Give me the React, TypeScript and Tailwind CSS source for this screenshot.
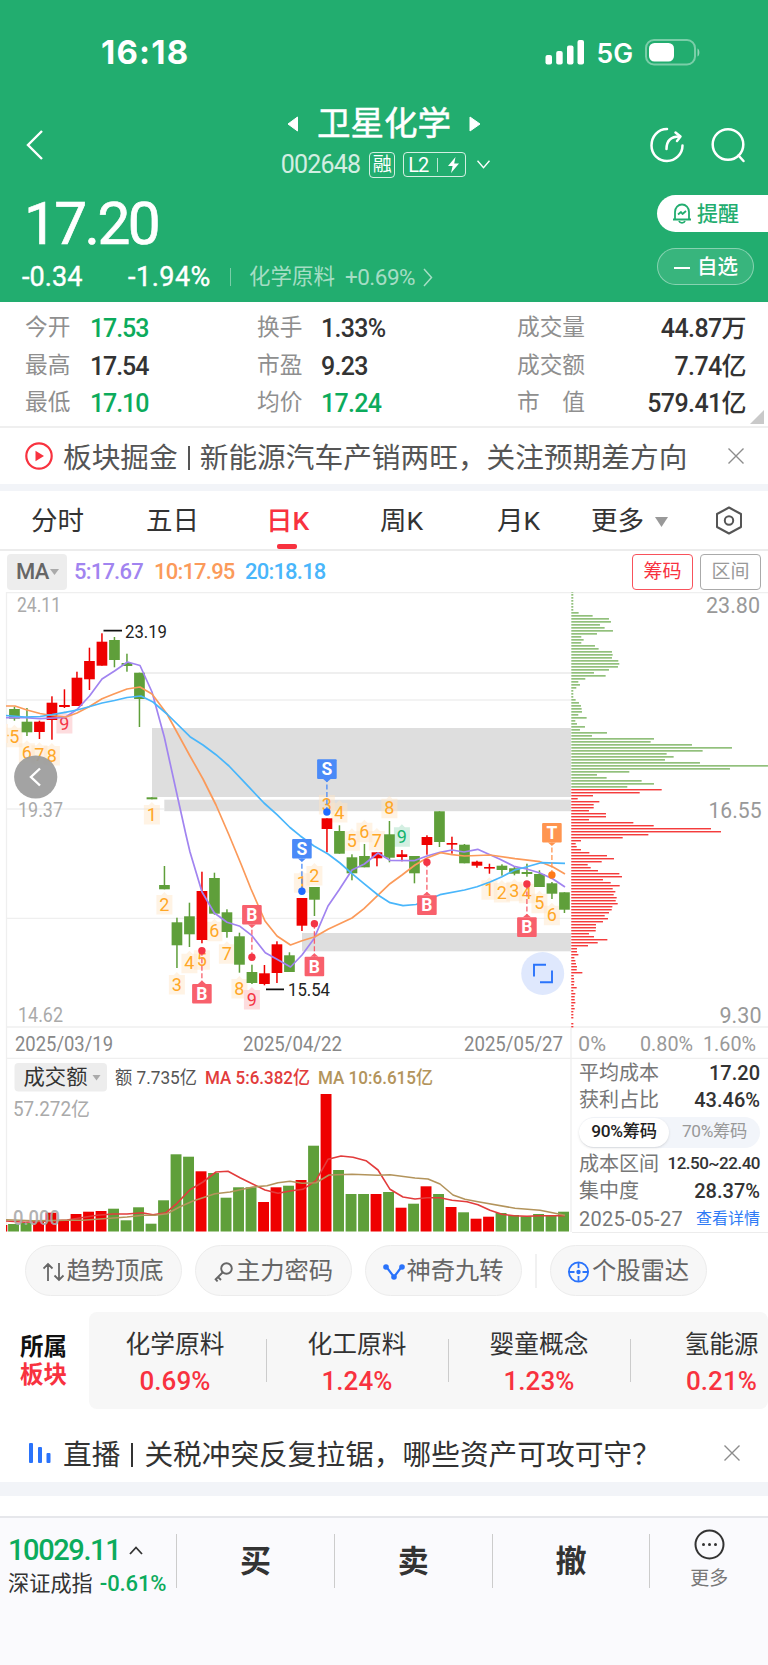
import { clsx } from "clsx";

type Candle = [high: number, top: number, bottom: number, low: number, up?: 1];

const UP = "#ee0000";
const DOWN = "#5f9f3a";

const candleX = (i: number) => 14.4 + i * 12.5;

const candles: Candle[] = [
  [706.7, 709, 718.7, 720.7], [708, 721.7, 732.3, 736], [720.7, 721.7, 732, 739, 1],
  [696.3, 702.7, 720, 739.7, 1], [689.3, 705, 707, 708, 1], [671.7, 677.7, 706, 706, 1],
  [647.7, 661, 679.3, 690, 1], [633.3, 641.7, 665.7, 665.7, 1], [637, 640, 660, 667.3],
  [653.7, 663, 666, 671.7], [672.7, 672.7, 699, 727], [797.3, 797.3, 799.3, 799.3],
  [866, 885, 889.3, 889.3], [917.7, 922.3, 945.3, 968], [902.7, 916.3, 934.3, 947],
  [871.7, 891, 940, 943.3, 1], [872.7, 878, 913.7, 914.7], [909.3, 912.3, 932, 937.7],
  [932.7, 936.3, 964.7, 972.7], [964.7, 972, 983, 984], [965, 973.3, 984, 985.3, 1],
  [941.3, 944.3, 973, 983, 1], [952.3, 955.3, 972, 972], [898, 898, 925.7, 931, 1],
  [887, 887, 899.7, 916], [818.3, 818.3, 829, 852.3, 1], [825.3, 831, 853.7, 853.7],
  [854.3, 857.3, 873.3, 880.3], [844, 856, 867.3, 867.3], [852.3, 852.3, 858.3, 866.3, 1],
  [821, 834.3, 857.7, 862.3], [850, 854.3, 857, 861.3, 1], [856, 856, 873.3, 883.3],
  [835.3, 837, 845, 854.7, 1], [811.3, 811.3, 842, 847], [836.7, 843, 844.7, 853.7, 1],
  [844, 844.7, 863.3, 863.3], [860.7, 861.7, 865.7, 867.7, 1], [863.7, 867, 868.5, 873.7, 1],
  [864.3, 865.7, 870, 875.7], [867, 868.3, 873.7, 875.3], [863.7, 872, 874, 876.7],
  [870.3, 874, 887, 887], [882, 883.3, 893.7, 899], [892.3, 892.3, 909.7, 913],
];

const ma5 =
  "6,717.7 25,717.7 40,718.7 65,717.5 77,709.5 89.5,696 102,679 114.5,671 127.5,662 140,665.5 152,692 164.3,737 176,790 186,835 190,852 202,892 214.4,913 227,922.3 240,926.3 252,935.7 265.3,952.7 277,959.3 290.5,967 302,955 314,938.7 328,906 339,890 352,870 364.4,864 378,853 390,860.3 414,860.7 427,856 440,852.3 452,850 464,852 477.7,849.3 500,859.3 514,866.3 526.7,869 540,873 553,879 565,887";
const ma10 =
  "6,706 15,706 27,710 40,713.5 52,715.5 66,717 77,713 89.5,706.5 102,698.7 114.5,693.7 127,689 140,687 152,694 167,714 190,756 203,779 216,805 229,835 241,864 251,889 258,905 265,921 277,936 290.5,945 302,940.7 315,936.7 328,929.3 352,918 364,908.7 390,883.7 402,875 415,865 427,858 440.7,852.7 452,854.7 464.5,856 490,855 515,858.7 540,861.7 553,867 565,874";
const ma20 =
  "6,715.5 25,717 40,716.5 52,714.7 65,712.3 77,710 89,706.7 102,703 114.5,700.5 127,697.5 141,696 153,702 167,714 190,736.7 203,745 216,754.7 229,766 241,778.7 264,803 277,814.7 290,827.5 300,835.7 314,846 328,854 340,863 352,873.7 364,883.7 378,895 390,902.7 403,905.7 416,904.5 440,894.7 464.5,890 477,886.7 490,882 502,876.7 515,870 527,866.7 541,862.7 565,863.3";

// [candle index, digit, centre y]
const counts: [number, string, number][] = [
  [0, "5", 736.7], [1, "6", 752.3], [2, "7", 754.3], [3, "8", 755], [4, "9", 723],
  [11, "1", 814], [12, "2", 904], [13, "3", 984], [14, "4", 962.7], [15, "5", 959.3],
  [16, "6", 930.7], [17, "7", 953.3], [18, "8", 988], [19, "9", 999],
  [23, "1", 882.3], [24, "2", 875], [25, "3", 804], [26, "4", 812], [27, "5", 840.3],
  [28, "6", 831.7], [29, "7", 840], [30, "8", 807.7], [31, "9", 836.3],
  [38, "1", 889.3], [39, "2", 892], [40, "3", 890.7], [41, "4", 892.7], [42, "5", 902.7], [43, "6", 914.7],
];

const signals = [
  { i: 25, label: "S", y: 759.3, dot: 812, fill: "#4a8af8", dotFill: "#1f6bff", below: false },
  { i: 23, label: "S", y: 839, dot: 891.3, fill: "#4a8af8", dotFill: "#1f6bff", below: false },
  { i: 15, label: "B", y: 984, dot: 950.7, fill: "#f8606c", dotFill: "#f43545", below: true },
  { i: 19, label: "B", y: 905, dot: 957.3, fill: "#f8606c", dotFill: "#f43545", below: false },
  { i: 24, label: "B", y: 956.7, dot: 923.7, fill: "#f8606c", dotFill: "#f43545", below: true },
  { i: 33, label: "B", y: 895.3, dot: 862.3, fill: "#f8606c", dotFill: "#f43545", below: true },
  { i: 41, label: "B", y: 917.3, dot: 884, fill: "#f8606c", dotFill: "#f43545", below: true },
  { i: 43, label: "T", y: 823, dot: 875, fill: "#ff9550", dotFill: "#ff7a1a", below: false },
];

const chipsGreen = [
  6, 6, 6, 6, 6, 6, 6, 22, 64, 113, 119, 86, 100, 125, 77, 30, 37, 30, 71, 82, 122, 124, 122, 141, 144, 140, 113,
  68, 103, 42, 21, 26, 15, 6, 6, 6, 13, 23, 29, 31, 32, 21, 46, 12, 17, 41, 26, 107, 62, 248, 238, 362, 482, 394,
  286, 307, 281, 386, 590, 476, 174, 77, 106, 211, 248, 168,
];
const chipsRed = [
  271, 205, 65, 19, 84, 67, 67, 53, 104, 104, 53, 186, 247, 419, 449, 231, 154, 29, 13, 16, 29, 54, 107, 128, 91,
  49, 58, 80, 144, 152, 95, 118, 145, 124, 132, 127, 136, 133, 139, 123, 121, 113, 100, 110, 95, 74, 74, 73, 53,
  68, 108, 79, 50, 17, 17, 21, 9, 12, 14, 17, 16, 33, 7, 8, 9, 8, 16, 6, 12, 10, 10, 12, 7, 10, 6, 6, 6, 0, 6, 6,
];

const volumeTops = [
  1224, 1223, 1221, 1212.7, 1220.7, 1214, 1211.7, 1211, 1208.7, 1220.3, 1207.3, 1223.7, 1200.3, 1154.3, 1156.7,
  1171.3, 1173, 1197.7, 1187.3, 1187.3, 1202, 1187.3, 1185.7, 1180, 1145.7, 1094, 1170, 1194, 1194, 1194, 1192,
  1207.7, 1203.7, 1186.3, 1194, 1207, 1212.3, 1218.7, 1216.7, 1213, 1215, 1216.3, 1214, 1215.3, 1211.7,
];
const volMa5 =
  "6,1221 25,1222.3 67,1220 97,1215.3 113,1214 127,1214 142,1212.7 153,1214.7 166,1212.7 177,1203.3 190,1189.7 203,1182 216,1172 228,1171.3 240,1177.7 265,1190 278,1193.3 290,1191 303,1189.3 316,1180.7 328,1159.3 341,1156 353,1157.3 366,1160.7 378,1170 390,1189.3 403,1197 415,1199 427,1197.7 440,1197.7 452,1200.3 467,1201.7 478,1204.7 490,1210.3 502,1214.3 514,1215.7 527,1216.3 540,1215.7 565,1215.7";
const volMa10 =
  "6,1219.7 33,1220.7 67,1220.3 83,1220.3 100,1219 127,1217 143,1215.3 155,1215.3 167,1213.7 180,1206.7 193,1201 215,1193.7 230,1192 253,1187 267,1185.7 278,1182.7 290,1181.3 302,1183.3 316,1182.7 329,1175 352,1174.3 378,1175.3 390,1174.7 415,1178 428,1179 440,1184 453,1195 465,1199.3 478,1201.7 515,1208.3 540,1210.3 565,1215.3";

const stats = [
  ["今开", "17.53", true, "换手", "1.33%", false, "成交量", "44.87万"],
  ["最高", "17.54", false, "市盈", "9.23", false, "成交额", "7.74亿"],
  ["最低", "17.10", true, "均价", "17.24", true, "市　值", "579.41亿"],
] as const;

const sectors = [
  ["化学原料", "0.69%"],
  ["化工原料", "1.24%"],
  ["婴童概念", "1.23%"],
  ["氢能源", "0.21%"],
];

function countColors(i: number, n: string) {
  if (n !== "9") return ["#ffa726", "rgba(255,228,196,.45)"];
  return i === 31 ? ["#12b36b", "#d3efe2"] : ["#f43545", "#fddcde"];
}

function ChartText({
  x, y, w, size, fill, end, weight = 400, children,
}: {
  x: number; y: number; w: number; size: number; fill: string; end?: boolean; weight?: number; children: string;
}) {
  return (
    <text
      x={x}
      y={y + size * 0.355}
      fontSize={size}
      fill={fill}
      fontWeight={weight}
      textAnchor={end ? "end" : "start"}
      textLength={w}
      lengthAdjust="spacingAndGlyphs"
    >
      {children}
    </text>
  );
}

function CloseIcon() {
  return (
    <svg width="16" height="16" viewBox="0 0 16 16" stroke="#8c8c8c" strokeWidth="1.4">
      <path d="M0.5 0.5 15.5 15.5M15.5 0.5 0.5 15.5" />
    </svg>
  );
}

function StatusBar() {
  return (
    <div className="flex h-[104px] items-center justify-between pr-[67px] pl-[101px]">
      <span className="mt-px font-[Inter] text-[33px] leading-none font-bold tracking-[1.2px]">16:18</span>
      <div className="flex items-center">
        <svg width="40" height="25" viewBox="0 0 40 25" fill="#fff">
          <rect x="0.5" y="15" width="6.5" height="9.5" rx="2" />
          <rect x="11.2" y="11" width="6.5" height="13.5" rx="2" />
          <rect x="22" y="5.5" width="6.5" height="19" rx="2" />
          <rect x="32.5" y="0" width="6.5" height="24.5" rx="2" />
        </svg>
        <span className="mt-[2px] ml-[11px] font-[Inter] text-[26.5px] leading-none font-semibold">5G</span>
        <svg className="ml-3" width="56" height="27" viewBox="0 0 56 27" fill="none">
          <rect x="1" y="1" width="49" height="24.5" rx="8" stroke="#fff" strokeOpacity="0.4" strokeWidth="2" />
          <rect x="4" y="4" width="25" height="18.5" rx="5.5" fill="#fff" />
          <path d="M52.5 9.5c2.5 1 2.5 7 0 8z" fill="#fff" fillOpacity="0.5" />
        </svg>
      </div>
    </div>
  );
}

function Header() {
  return (
    <header className="h-[302px] bg-[#22ad6f] text-white">
      <StatusBar />
      <div className="flex h-[82px] items-center justify-between pr-[22px] pl-[26px]">
        <svg width="76" height="30" viewBox="0 0 76 30" fill="none" stroke="#fff" strokeWidth="2.4">
          <path d="M16 1 2 15 16 29" />
        </svg>
        <div className="flex flex-col items-center pl-[20px]">
          <div className="-mt-[3px] mr-[3px] flex h-[38px] items-center">
            <svg width="12" height="16" viewBox="0 0 12 16" fill="#fff" stroke="#fff" strokeLinejoin="round">
              <path d="M10.5 1v14L1 8z" />
            </svg>
            <h1 className="mx-[18px] text-[33.5px] leading-none [-webkit-text-stroke:0.5px_white]">卫星化学</h1>
            <svg width="12" height="16" viewBox="0 0 12 16" fill="#fff" stroke="#fff" strokeLinejoin="round">
              <path d="M1 1v14L11 8z" />
            </svg>
          </div>
          <div className="mt-[4px] flex h-9 items-center">
            <span className="text-[25px] leading-none tracking-[-0.8px] opacity-80">002648</span>
            <span className="ml-[9px] flex h-[26px] w-[26px] items-center justify-center rounded-[4px] border border-white/80 text-[19px] leading-none">
              融
            </span>
            <span className="ml-2 flex h-[25px] w-[63px] items-center rounded-[4px] border border-white/80 pl-1 text-[20px] leading-none tracking-[-1px]">
              L2
              <i className="mr-[9px] ml-[9px] h-[14px] w-px bg-white/70" />
              <svg width="13" height="16" viewBox="0 0 13 16" fill="#fff">
                <path d="M8.5 0 1 9h4.6L4 16l8-9.6H7.2z" />
              </svg>
            </span>
            <svg className="ml-[11px]" width="13" height="9" viewBox="0 0 13 9" fill="none" stroke="#fff" strokeWidth="1.4">
              <path d="M0.5 0.7 6.5 7.7 12.5 0.7" />
            </svg>
          </div>
        </div>
        <div className="flex items-center gap-[26px]">
          <svg width="36" height="36" viewBox="0 0 36 36" fill="none" stroke="#fff" strokeWidth="2.5" strokeLinecap="round" strokeLinejoin="round">
            <path d="M18 2C9 2 2.5 9.5 2.5 18.5S9.5 34 18 34s15.5-7 15.5-15.5" />
            <path d="M17.5 22c0-8 4-12.5 13-12.5" />
            <path d="M26.5 5.500 31.500 9.500 28 14" />
          </svg>
          <svg width="35" height="36" viewBox="0 0 35 36" fill="none" stroke="#fff" strokeWidth="2.5" strokeLinecap="round">
            <circle cx="17" cy="17.5" r="15.3" />
            <path d="M27.5 28.500 32.500 34" />
          </svg>
        </div>
      </div>
      <div className="flex justify-between">
        <div className="flex flex-col">
          <div className="mt-[8px] flex h-[60px] items-center pl-[24px] text-[58.5px] leading-none tracking-[-2.6px] [-webkit-text-stroke:0.7px_white]">17.20</div>
          <div className="mt-[3px] flex h-10 items-center pl-[22px] leading-none">
            <span className="w-[106px] text-[27px] tracking-[0.1px] [-webkit-text-stroke:0.4px_white]">-0.34</span>
            <span className="text-[27px] tracking-[0.5px] [-webkit-text-stroke:0.4px_white]">-1.94%</span>
            <i className="mr-[18px] ml-[19px] h-[18px] w-px bg-white/40" />
            <span className="text-[21.5px] text-white/60">化学原料</span>
            <span className="ml-[10px] text-[22.5px] tracking-[-0.5px] text-white/60">+0.69%</span>
            <svg className="ml-2" width="10" height="19" viewBox="0 0 10 19" fill="none" stroke="#fff" strokeOpacity="0.6" strokeWidth="1.5">
              <path d="M1 1 8.5 9.500 1 18" />
            </svg>
          </div>
        </div>
        <div className="mt-[9px] flex flex-col">
          <div className="flex h-[37px] w-[111px] items-center rounded-l-full bg-white pl-[15px] text-[21px] leading-none font-medium text-[#22ad6f]">
            <svg width="20" height="21" viewBox="0 0 20 21" fill="none" stroke="#22ad6f" strokeWidth="1.8" strokeLinejoin="round">
              <path d="M3 16V9a7 7.5 0 0 1 14 0v7M1 16.500h18" />
              <path d="M7 18c1 2.5 5 2.5 6 0M6 11.500 9 9l1.500 2L14 8" />
            </svg>
            <span className="mt-[1px] ml-[5px]">提醒</span>
          </div>
          <div className="mt-4 flex h-[37px] w-[97px] items-center rounded-full border border-white/40 bg-white/10 pt-[2px] pl-4 text-[20.5px] leading-none font-medium">
            <i className="mr-[7px] h-[2px] w-4 bg-white" />
            自选
          </div>
        </div>
      </div>
    </header>
  );
}

function Stats() {
  return (
    <section className="relative flex h-[126px] flex-col border-b-2 border-[#efefef] pt-[8px]">
      {stats.map(([a, av, aGreen, b, bv, bGreen, c, cv]) => (
        <div key={a} className="flex h-[37.5px] items-center pr-[22px] pl-[25px] text-[22.7px] leading-none text-[#8f8f8f]">
          <span className="w-[65px]">{a}</span>
          <span className={clsx("w-[167px] text-[25px] font-medium tracking-[-1.1px]", aGreen ? "text-[#0cab5c]" : "text-[#333]")}>{av}</span>
          <span className="w-[64px]">{b}</span>
          <span className={clsx("w-[196px] text-[25px] font-medium tracking-[-0.7px]", bGreen ? "text-[#0cab5c]" : "text-[#333]")}>{bv}</span>
          <span>{c}</span>
          <span className="ml-auto text-[25px] font-medium tracking-[-0.6px] text-[#333]">{cv}</span>
        </div>
      ))}
      <svg className="absolute right-1 bottom-[2px]" width="14" height="14" viewBox="0 0 14 14">
        <path d="M14 0v14H0z" fill="#c9c9c9" />
      </svg>
    </section>
  );
}

function NewsRow() {
  return (
    <div className="flex h-[56px] items-center pr-[24px] pl-[25px]">
      <svg width="28" height="28" viewBox="0 0 28 28" fill="none">
        <circle cx="14" cy="14" r="12.7" stroke="#f8323f" strokeWidth="2.2" />
        <path d="M10.5 8.8v10.4L19 14z" fill="#f8323f" />
      </svg>
      <span className="mt-[4px] ml-[10px] text-[28.7px] leading-none whitespace-nowrap text-[#555]">
        板块掘金
        <i className="mx-[10px] inline-block h-[24px] w-[2px] bg-[#555] align-[-2px]" />
        新能源汽车产销两旺，关注预期差方向
      </span>
      <span className="ml-auto">
        <CloseIcon />
      </span>
    </div>
  );
}

function Tabs() {
  return (
    <nav className="flex h-[60px] items-center border-b-2 border-[#ececec] pt-[3px] text-[26.5px] leading-none text-[#333]">
      <span className="ml-[31px] w-[115px]">分时</span>
      <span className="w-[120px]">五日</span>
      <span className="relative w-[114px] text-[#f8323f]">
        <b className="font-medium">日K</b>
        <i className="absolute top-[36px] left-[11px] h-[5px] w-5 rounded-[2px] bg-[#f8323f]" />
      </span>
      <span className="w-[117px]">周K</span>
      <span className="w-[94px]">月K</span>
      <span>更多</span>
      <svg className="ml-[11px]" width="13" height="10" viewBox="0 0 13 10">
        <path d="M0 0h13L6.5 10z" fill="#999" />
      </svg>
      <svg className="-mt-[3px] ml-[47px]" width="28" height="29" viewBox="0 0 28 29" fill="none" stroke="#555" strokeWidth="2" strokeLinejoin="round">
        <path d="M14 1.500 26 8v13L14 27.500 2 21V8z" />
        <circle cx="14" cy="14.5" r="4.2" />
      </svg>
    </nav>
  );
}

function MaRow() {
  return (
    <div className="flex h-[41px] items-center pr-[7px] pl-[7px] text-[22px] leading-none font-medium tracking-[-0.8px]">
      <span className="flex h-9 w-[60px] items-center rounded-[4px] bg-[#ededed] pl-[9px] text-[#666]">
        MA
        <svg className="ml-[2px]" width="9" height="6" viewBox="0 0 9 6">
          <path d="M0 0h9L4.5 6z" fill="#aaa" />
        </svg>
      </span>
      <span className="ml-[7px] w-[80px] text-[#a184f0]">5:17.67</span>
      <span className="w-[91px] text-[#fb9a5a]">10:17.95</span>
      <span className="text-[#49b6fb]">20:18.18</span>
      <span className="ml-auto flex h-9 w-[61px] items-center justify-center rounded-[4px] border border-[#f8525c] text-[19px] font-normal tracking-normal text-[#f8323f]">
        筹码
      </span>
      <span className="ml-[7px] flex h-9 w-[61px] items-center justify-center rounded-[4px] border border-[#aaa] text-[19px] font-normal tracking-normal text-[#999]">
        区间
      </span>
    </div>
  );
}

function KLine() {
  return (
    <svg className="block" width="768" height="467" viewBox="0 592 768 467">
      <g fill="#dedede">
        <rect x="152" y="728" width="419" height="69" />
        <rect x="164.3" y="799.7" width="406.7" height="11.5" />
        <rect x="302" y="933" width="269" height="18.3" />
      </g>
      <g stroke="#efefef" strokeWidth="1.3">
        <path d="M6 592.6H768M6 700H571M6 809H164M6 918.3H571M6 1027H768M6 1058.5H768M6.5 592V1059M571 1027V1059" />
        <path d="M144 673H571" strokeWidth="2" />
      </g>
      <ChartText x={17} y={605} w={44} size={19.5} fill="#aaa">24.11</ChartText>
      <ChartText x={18} y={810} w={45} size={19.5} fill="#aaa">19.37</ChartText>
      <ChartText x={18} y={1015.5} w={45} size={19.5} fill="#aaa">14.62</ChartText>
      <g>
        {chipsGreen.map((n, i) => (
          <rect key={i} x="571.3" y={591 + i * 3} width={n / 3} height="1.7" fill="#92c07c" />
        ))}
        {chipsRed.map((n, i) => (
          <g key={i}>
            <rect x="571.3" y={789 + i * 3} width={n / 3} height="2" fill="#fcc4c4" />
            <rect x="571.3" y={789 + i * 3} width={n / 3} height="1.2" fill="#f43c3c" />
          </g>
        ))}
      </g>
      <path d="M6 724h2v19H6z" fill="#fff1e2" />
      <path d="M7 735.5h2" stroke="#ffa726" strokeWidth="1.5" />
      {counts.map(([i, n, y]) => {
        const [color, bg] = countColors(i, n);
        const x = candleX(i);
        return (
          <g key={i}>
            <path d={`M${x - 8} ${y - 9}h5l3-3 3 3h5v19.5h-16z`} fill={bg} />
            <text x={x} y={y + 6.5} fontSize="18" fill={color} textAnchor="middle">{n}</text>
          </g>
        );
      })}
      {candles.map(([high, top, bottom, low, up], i) => (
        <g key={i} fill={up ? UP : DOWN}>
          <rect x={candleX(i) - 0.7} y={high} width="1.5" height={low - high} />
          <rect x={candleX(i) - 5.3} y={top} width="10.7" height={Math.max(bottom - top, 1.6)} />
        </g>
      ))}
      <g fill="none" strokeWidth="1.7" strokeLinejoin="round">
        <polyline points={ma5} stroke="#a184f0" />
        <polyline points={ma10} stroke="#fb9a5a" />
        <polyline points={ma20} stroke="#49b6fb" />
      </g>
      {signals.map((s) => {
        const x = candleX(s.i);
        return (
          <g key={s.i}>
            <path d={`M${x} ${s.dot}V${s.below ? s.y : s.y + 19.5}`} stroke={s.fill} strokeWidth="1.3" strokeDasharray="5 2.5" />
            <circle cx={x} cy={s.dot} r="3.7" fill={s.dotFill} />
            <rect x={x - 9.8} y={s.y} width="19.6" height="19.6" rx="1" fill={s.fill} />
            <path
              d={s.below ? `M${x - 4} ${s.y}l4-3.5 4 3.5z` : `M${x - 4} ${s.y + 19.5}l4 3.5 4-3.5z`}
              fill={s.fill}
            />
            <text x={x} y={s.y + 16} fontSize="17.5" fontWeight="700" fill="#fff" textAnchor="middle">{s.label}</text>
          </g>
        );
      })}
      <path d="M103.5 630.7H122M266 989.3H284" stroke="#111" strokeWidth="1.7" />
      <ChartText x={125} y={631.5} w={42} size={18} fill="#222">23.19</ChartText>
      <ChartText x={288} y={990} w={42} size={18} fill="#222">15.54</ChartText>
      <circle cx="35.7" cy="777" r="21.6" fill="#9c9c9c" fillOpacity="0.93" />
      <path d="M40 768.5 31 777l9 8.5" fill="none" stroke="#fff" strokeWidth="2.4" />
      <circle cx="542.7" cy="973.5" r="21.5" fill="#dfe8fd" />
      <path d="M534 976.5V964.8H546M540 982.3H552V970.5" fill="none" stroke="#2a73fb" strokeWidth="1.9" />
      <ChartText x={15} y={1044} w={98} size={20} fill="#888">2025/03/19</ChartText>
      <ChartText x={243} y={1044} w={99} size={20} fill="#888">2025/04/22</ChartText>
      <ChartText x={464} y={1044} w={99} size={20} fill="#888">2025/05/27</ChartText>
      <ChartText x={760} y={605.5} w={54} size={22} fill="#999" end>23.80</ChartText>
      <ChartText x={761.5} y={810.5} w={53} size={22} fill="#999" end>16.55</ChartText>
      <ChartText x={761.5} y={1015.5} w={42} size={22} fill="#999" end>9.30</ChartText>
      <ChartText x={578} y={1044.5} w={28} size={19.5} fill="#999">0%</ChartText>
      <ChartText x={640} y={1044.5} w={53} size={19.5} fill="#999">0.80%</ChartText>
      <ChartText x={703} y={1044.5} w={53} size={19.5} fill="#999">1.60%</ChartText>
    </svg>
  );
}

function Volume() {
  return (
    <svg className="block" width="572" height="174" viewBox="0 1059 572 174">
      <path d="M6.5 1059V1232M571 1059V1232" stroke="#efefef" strokeWidth="1.3" />
      <rect x="14.5" y="1063" width="92.5" height="28.5" rx="4" fill="#ededed" />
      <ChartText x={23.5} y={1076.5} w={64} size={21} fill="#333">成交额</ChartText>
      <path d="M92.5 1075h8l-4 5.5z" fill="#aaa" />
      <ChartText x={115} y={1078} w={82} size={18} fill="#555">额 7.735亿</ChartText>
      <ChartText x={205} y={1078} w={105} size={18} fill="#e23c3c" weight={500}>MA 5:6.382亿</ChartText>
      <ChartText x={318} y={1078} w={115} size={18} fill="#b3945c" weight={500}>MA 10:6.615亿</ChartText>
      <ChartText x={13} y={1109} w={77} size={19.5} fill="#aaa">57.272亿</ChartText>
      <rect x="6" y="1225" width="1.3" height="6.5" fill={UP} />
      {volumeTops.map((top, i) => (
        <rect key={i} x={candleX(i) - 6.3} y={top} width="10.9" height={1231.5 - top} fill={candles[i][4] ? UP : DOWN} />
      ))}
      <g fill="none" strokeWidth="1.6" strokeLinejoin="round">
        <polyline points={volMa5} stroke="#e23c3c" />
        <polyline points={volMa10} stroke="#b3945c" />
      </g>
      <g opacity="0.9">
        <ChartText x={13} y={1218.5} w={47} size={19.5} fill="#aaa" weight={500}>0.000</ChartText>
      </g>
    </svg>
  );
}

function ChipPanel() {
  return (
    <div className="flex h-[174px] flex-1 flex-col border-b border-[#ececec] pr-[8px] pl-[7px] text-[20px] leading-none whitespace-nowrap text-[#777]">
      <div className="mt-[1px] flex h-[27px] items-center justify-between">
        平均成本<span className="font-medium text-[#333]">17.20</span>
      </div>
      <div className="flex h-[27px] items-center justify-between">
        获利占比<span className="font-medium text-[#333]">43.46%</span>
      </div>
      <div className="mt-[3px] flex h-[31px] items-center rounded-full bg-[#f2f5fa] text-[17.3px] tracking-[-0.3px] text-[#999]">
        <span className="flex h-[29px] w-[90px] items-center justify-center rounded-full bg-white font-medium text-[#222] shadow-sm">90%筹码</span>
        <span className="flex-1 text-center">70%筹码</span>
      </div>
      <div className="mt-[3px] flex h-[27px] items-center justify-between">
        成本区间<span className="text-[17px] font-medium tracking-[-0.5px] text-[#333]">12.50~22.40</span>
      </div>
      <div className="flex h-[28px] items-center justify-between">
        集中度<span className="font-medium text-[#333]">28.37%</span>
      </div>
      <div className="flex h-[27px] items-center justify-between tracking-[0.3px]">
        2025-05-27<span className="text-[16px] tracking-normal text-[#2f7bf5]">查看详情</span>
      </div>
    </div>
  );
}

const pill =
  "flex h-[51px] w-[157px] items-center justify-center rounded-full border border-[#ececec] bg-[#f7f7f7] pt-[2px] text-[24.3px] leading-none whitespace-nowrap text-[#666]";

function Tools() {
  return (
    <div className="flex h-[75px] items-center gap-[13px] pl-[25px]">
      <div className={pill}>
        <svg width="23" height="20" viewBox="0 0 23 20" fill="none" stroke="#666" strokeWidth="1.8">
          <path d="M5 19V2M0.5 6.5 5 2l4.500 4.500M16 1v17M11.500 13.500l4.500 4.500 4.500-4.500" />
        </svg>
        趋势顶底
      </div>
      <div className={pill}>
        <svg width="22" height="20" viewBox="0 0 22 20" fill="none" stroke="#666" strokeWidth="1.9">
          <circle cx="12.5" cy="6.5" r="5.3" />
          <path d="M8.800 10.300 1 18M4 15l3 3M1.500 16.500l2 3" />
        </svg>
        主力密码
      </div>
      <div className={pill}>
        <svg width="23" height="18" viewBox="0 0 23 18" fill="#2a73fb">
          <path d="M3.5 4 11 14 18.500 4" fill="none" stroke="#2a73fb" strokeWidth="2.2" />
          <circle cx="3" cy="4" r="2.8" />
          <circle cx="11" cy="14" r="2.8" />
          <circle cx="19" cy="4" r="2.8" />
        </svg>
        神奇九转
      </div>
      <i className="h-[34px] w-[2px] bg-[#f1f1f1]" />
      <div className={pill}>
        <svg width="24" height="22" viewBox="0 0 24 22" fill="none" stroke="#2a73fb" strokeWidth="1.8">
          <circle cx="10.5" cy="11" r="9.6" />
          <path d="M10.5 1.500v5.500M10.500 15v5.500M1 11h5.500M14.500 11H20" />
          <circle cx="10.5" cy="11" r="1.3" fill="#2a73fb" />
        </svg>
        个股雷达
      </div>
    </div>
  );
}

function Sectors() {
  return (
    <div className="flex h-[106px] items-start">
      <div className="mt-[26px] w-[89px] pl-[20px] text-[23.5px] leading-[27.5px] font-bold">
        <p className="text-[#111]">所属</p>
        <p className="text-[#f8323f]">板块</p>
      </div>
      <div className="mt-[4px] flex h-[97px] w-[679px] overflow-hidden rounded-[8px] bg-[#f7f7f7]">
        {sectors.map(([name, pct], i) => (
          <div key={name} className={clsx("flex shrink-0 items-center", i === 0 ? "w-[178px]" : "w-[182px]")}>
            <div className={clsx("flex flex-1 flex-col items-center pt-[6px] text-[24.7px] leading-none", i === 0 ? "-ml-[5px]" : "-ml-[1px]")}>
              <span className="text-[#333]">{name}</span>
              <span className="mt-[11px] text-[26px] font-medium tracking-[0.1px] text-[#f8323f]">{pct}</span>
            </div>
            {i < 3 && <i className="h-[43px] w-px bg-[#ccc]" />}
          </div>
        ))}
      </div>
    </div>
  );
}

function LiveRow() {
  return (
    <div className="flex h-[68px] items-center pt-[10px] pr-[28px] pl-[29px]">
      <svg width="22" height="22" viewBox="0 0 22 22" fill="#2a73fb">
        <rect x="0" y="1" width="4" height="20" rx="1" />
        <rect x="9" y="5" width="4" height="16" rx="1" />
        <rect x="17.5" y="11" width="4" height="10" rx="1" />
      </svg>
      <span className="mt-[4px] ml-[12px] text-[28.7px] leading-none whitespace-nowrap text-[#333]">
        直播
        <i className="mx-[11px] inline-block h-[24px] w-[2px] bg-[#333] align-[-2px]" />
        关税冲突反复拉锯，哪些资产可攻可守？
      </span>
      <span className="ml-auto">
        <CloseIcon />
      </span>
    </div>
  );
}

function BottomBar() {
  return (
    <footer className="flex h-[149px] items-start border-t-2 border-[#e6e7eb] bg-[#fafafd] leading-none">
      <div className="w-[176px] shrink-0 pl-2 whitespace-nowrap">
        <div className="mt-[16px] flex h-[32px] items-center text-[29px] font-medium tracking-[-1.4px] text-[#0cab5c]">
          10029.11
          <svg className="ml-[9px]" width="14" height="9" viewBox="0 0 14 9" fill="none" stroke="#333" strokeWidth="1.8">
            <path d="M1 8 7 1.500 13 8" />
          </svg>
        </div>
        <div className="mt-[4px] flex h-[28px] items-center text-[21.2px] text-[#333]">
          深证成指
          <span className="ml-[7px] text-[22px] font-medium tracking-[-0.1px] text-[#0cab5c]">-0.61%</span>
        </div>
      </div>
      {["买", "卖", "撤"].map((label) => (
        <div
          key={label}
          className="mt-4 flex h-[54px] w-[157.8px] items-center justify-center border-l border-[#ccc] pt-[1px] text-[31px] font-bold text-[#333]"
        >
          {label}
        </div>
      ))}
      <div className="mt-4 flex h-[54px] flex-1 flex-col items-center border-l border-[#ccc]">
        <svg className="-mt-[5px] shrink-0" width="31" height="31" viewBox="0 0 31 31" fill="#333">
          <circle cx="15.5" cy="15.5" r="14" fill="none" stroke="#333" strokeWidth="2" />
          <circle cx="9.5" cy="15.5" r="1.5" />
          <circle cx="15.5" cy="15.5" r="1.5" />
          <circle cx="21.5" cy="15.5" r="1.5" />
        </svg>
        <span className="mt-[9px] text-[19px] text-[#777]">更多</span>
      </div>
    </footer>
  );
}

export default function App() {
  return (
    <div className="w-[768px] overflow-hidden bg-white font-[Roboto,'Noto_Sans_CJK_SC',sans-serif]">
      <Header />
      <Stats />
      <NewsRow />
      <div className="h-[7px] bg-[#f2f4f8]" />
      <Tabs />
      <MaRow />
      <KLine />
      <div className="flex">
        <Volume />
        <ChipPanel />
      </div>
      <Tools />
      <Sectors />
      <LiveRow />
      <div className="h-[14px] bg-[#f2f4f8]" />
      <div className="h-[20px]" />
      <BottomBar />
    </div>
  );
}
